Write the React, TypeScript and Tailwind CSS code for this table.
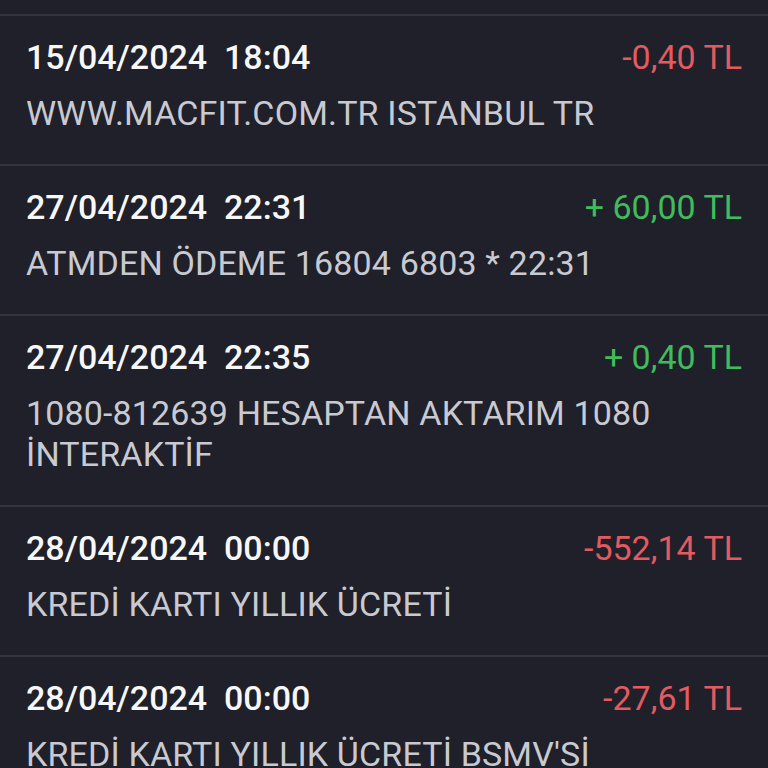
import React from "react";

type Tx = { date: string; amount: string; positive: boolean; desc: string[] };

const txs: Tx[] = [
  { date: "15/04/2024  18:04", amount: "-0,40 TL", positive: false, desc: ["WWW.MACFIT.COM.TR ISTANBUL TR"] },
  { date: "27/04/2024  22:31", amount: "+ 60,00 TL", positive: true, desc: ["ATMDEN ÖDEME 16804 6803 * 22:31"] },
  { date: "27/04/2024  22:35", amount: "+ 0,40 TL", positive: true, desc: ["1080-812639 HESAPTAN AKTARIM 1080", "İNTERAKTİF"] },
  { date: "28/04/2024  00:00", amount: "-552,14 TL", positive: false, desc: ["KREDİ KARTI YILLIK ÜCRETİ"] },
  { date: "28/04/2024  00:00", amount: "-27,61 TL", positive: false, desc: ["KREDİ KARTI YILLIK ÜCRETİ BSMV'Sİ"] },
];

export default function App() {
  return (
    <div
      className="w-[768px] h-[768px] overflow-hidden bg-[#1f2029]"
      style={{ fontFamily: "Roboto, 'Noto Sans', sans-serif" }}
    >
      <div className="h-[14px]" />
      {txs.map((t, i) => (
        <div key={i} className="border-t-2 border-[#33353e]">
          <div className="pl-[26px] pr-[26px] pt-[21px] pb-[30px]">
            <div className="flex items-center justify-between h-[40px] text-[34px] leading-[40px]">
              <span className="font-medium text-[#f7f7f8] whitespace-pre">{t.date}</span>
              <span className={t.positive ? "text-[#3fbc5c]" : "text-[#e35a60]"}>{t.amount}</span>
            </div>
            <div className="mt-[16px] text-[34px] leading-[41px] tracking-[0.15px] text-[#c9cad1]">
              {t.desc.map((d, j) => (
                <div key={j}>{d}</div>
              ))}
            </div>
          </div>
        </div>
      ))}
    </div>
  );
}
